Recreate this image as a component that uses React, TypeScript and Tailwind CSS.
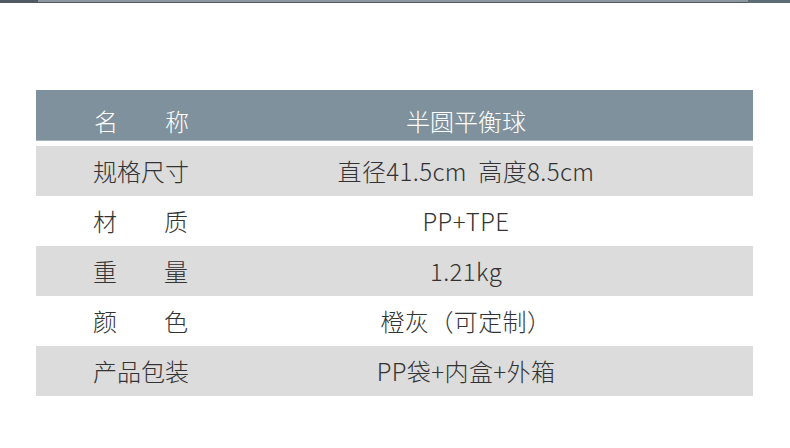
const rows: { label: string; value: string; spread?: boolean }[] = [
  { label: "规格尺寸", value: "直径41.5cm  高度8.5cm" },
  { label: "材质", value: "PP+TPE", spread: true },
  { label: "重量", value: "1.21kg", spread: true },
  { label: "颜色", value: "橙灰（可定制）", spread: true },
  { label: "产品包装", value: "PP袋+内盒+外箱" },
];

const Label = ({ text, spread }: { text: string; spread?: boolean }) =>
  spread ? (
    <div className="flex w-[95px] justify-between">
      {text.split("").map((c) => (
        <span key={c}>{c}</span>
      ))}
    </div>
  ) : (
    <span>{text}</span>
  );

export default function App() {
  return (
    <div
      className="w-[790px] h-[448px] bg-white overflow-hidden"
      style={{ fontFamily: '"Noto Sans CJK SC", "Noto Sans", sans-serif' }}
    >
      {/* top strip */}
      <div className="flex h-[3px] bg-[#4f5a61]">
        <div className="w-[38px]" />
        <div className="flex-1 bg-[#8c979e] mb-[1px]" />
        <div className="w-[42px] bg-[#5d6d75]" />
      </div>

      <div className="mx-[36px] mt-[87px] w-[717px]">
        {/* header */}
        <div className="flex h-[51px] items-center bg-[#7f919c] border-b border-[#a9b6bd] pt-[12px] text-[24px] font-light text-white">
          <div className="w-[250px] pl-[58px] whitespace-nowrap">
            <Label text="名称" spread />
          </div>
          <div className="flex-1 pr-[107px] text-center whitespace-nowrap">半圆平衡球</div>
        </div>

        <div className="mt-[5px] text-[24px] font-light text-[#333]">
          {rows.map((r, i) => (
            <div
              key={r.label}
              className={`flex h-[50px] items-center ${i % 2 === 0 ? "bg-[#dcdcdc]" : "bg-white"}`}
            >
              <div className="w-[250px] pl-[57px] whitespace-nowrap">
                <Label text={r.label} spread={r.spread} />
              </div>
              <div className="flex-1 pr-[107px] text-center whitespace-pre tracking-[0.4px]">
                {r.value}
              </div>
            </div>
          ))}
        </div>
      </div>
    </div>
  );
}
